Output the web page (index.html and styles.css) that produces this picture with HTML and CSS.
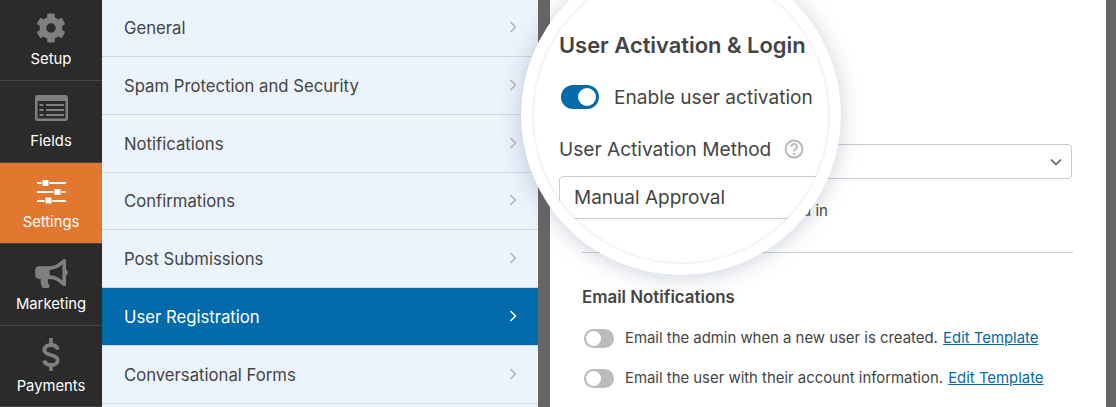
FILE: index.html
```html
<!DOCTYPE html>
<html lang="en">
<head>
<meta charset="utf-8">
<title>User Activation</title>
<link rel="stylesheet" href="styles.css">
</head>
<body>
<div class="app">
  <nav class="nav">
    <a class="nav-item">
      <svg class="ic ic-gear" viewBox="0 0 512 512"><path d="M487.4 315.7l-42.6-24.6c4.3-23.2 4.3-47 0-70.2l42.6-24.6c4.9-2.8 7.1-8.6 5.5-14-11.1-35.6-30-67.8-54.7-94.6-3.8-4.1-10-5.1-14.8-2.3L380.8 110c-17.9-15.4-38.5-27.3-60.8-35.1V25.8c0-5.6-3.9-10.5-9.4-11.7-36.7-8.2-74.3-7.8-109.2 0-5.5 1.2-9.4 6.1-9.4 11.7V75c-22.2 7.9-42.8 19.8-60.8 35.1L88.7 85.5c-4.9-2.8-11-1.9-14.8 2.3-24.7 26.7-43.6 58.9-54.7 94.6-1.7 5.4.6 11.2 5.5 14L67.3 221c-4.3 23.2-4.3 47 0 70.2l-42.6 24.6c-4.9 2.8-7.1 8.6-5.5 14 11.1 35.6 30 67.8 54.7 94.6 3.8 4.1 10 5.1 14.8 2.3l42.6-24.6c17.9 15.4 38.5 27.3 60.8 35.1v49.2c0 5.6 3.9 10.5 9.4 11.7 36.7 8.2 74.3 7.8 109.2 0 5.5-1.2 9.4-6.1 9.4-11.7v-49.2c22.2-7.9 42.8-19.8 60.8-35.1l42.6 24.6c4.9 2.8 11 1.9 14.8-2.3 24.7-26.7 43.6-58.9 54.7-94.6 1.5-5.5-.7-11.3-5.6-14.1zM256 336c-44.1 0-80-35.9-80-80s35.9-80 80-80 80 35.9 80 80-35.9 80-80 80z"/></svg>
      <span>Setup</span>
    </a>
    <a class="nav-item">
      <svg class="ic ic-fields" viewBox="0 0 33 26"><path fill-rule="evenodd" d="M3 0h27a3 3 0 0 1 3 3v20a3 3 0 0 1-3 3H3a3 3 0 0 1-3-3V3a3 3 0 0 1 3-3zM2.500 6v17a.5.5 0 0 0 .5.500h27a.5.5 0 0 0 .5-.500V6zM4.500 9h4v2h-4zM11 9h18v2H11zM4.500 14h4v2h-4zM11 14h18v2H11zM4.500 19h4v2h-4zM11 19h18v2H11z"/></svg>
      <span>Fields</span>
    </a>
    <a class="nav-item is-active">
      <svg class="ic ic-sliders" viewBox="0 0 29 25"><path d="M0 3h29v2H0zM0 12h29v2H0zM0 21h29v2H0z"/><path class="knob" d="M5 .5h7v7H5zM17 9.500h7v7h-7zM8 18h7v7H8z"/></svg>
      <span>Settings</span>
    </a>
    <a class="nav-item">
      <svg class="ic ic-horn" viewBox="0 0 576 512"><path d="M576 240c0-23.63-12.95-44.04-32-55.12V32.01C544 23.26 537.02 0 512 0c-7.12 0-14.19 2.38-19.98 7.02l-85.03 68.03C364.28 109.19 310.66 128 256 128H64c-35.35 0-64 28.65-64 64v96c0 35.35 28.65 64 64 64h33.7c-1.39 10.48-2.18 21.14-2.18 32 0 39.77 9.26 77.35 25.56 110.94 5.19 10.69 16.52 17.06 28.4 17.06h74.28c26.05 0 41.69-29.84 25.9-50.56-16.4-21.52-26.15-48.36-26.15-77.44 0-11.11 1.62-21.79 4.41-32H256c54.66 0 108.28 18.81 150.98 52.95l85.03 68.03a32.023 32.023 0 0 0 19.98 7.02c24.92 0 32-22.78 32-32V295.13C563.05 284.04 576 263.63 576 240zm-96 141.42l-33.05-26.44C392.95 311.78 325.12 288 256 288v-96c69.12 0 136.95-23.78 190.95-66.98L480 98.58v282.84z"/></svg>
      <span>Marketing</span>
    </a>
    <a class="nav-item">
      <svg class="ic ic-dollar" viewBox="0 0 18 33"><path class="dollar-s" d="M15.800 11.500C15 8.500 12.500 7 9 7 5 7 2.300 9 2.300 12c0 3 2.700 4 6.700 5 4 1 6.700 2.500 6.700 5.500 0 2.500-2.700 4.500-6.700 4.500-3.500 0-6-1.500-6.800-4.500"/><path d="M7.200 0h3.600v7H7.200zM7.200 27h3.600v6H7.200z"/></svg>
      <span>Payments</span>
    </a>
  </nav>

  <ul class="menu">
    <li class="menu-row">General<svg class="chev" viewBox="0 0 8 12"><path d="M1.500 1l5 5-5 5"/></svg></li>
    <li class="menu-row">Spam Protection and Security<svg class="chev" viewBox="0 0 8 12"><path d="M1.500 1l5 5-5 5"/></svg></li>
    <li class="menu-row">Notifications<svg class="chev" viewBox="0 0 8 12"><path d="M1.500 1l5 5-5 5"/></svg></li>
    <li class="menu-row">Confirmations<svg class="chev" viewBox="0 0 8 12"><path d="M1.500 1l5 5-5 5"/></svg></li>
    <li class="menu-row">Post Submissions<svg class="chev" viewBox="0 0 8 12"><path d="M1.500 1l5 5-5 5"/></svg></li>
    <li class="menu-row is-active">User Registration<svg class="chev" viewBox="0 0 8 12"><path d="M1.500 1l5 5-5 5"/></svg></li>
    <li class="menu-row">Conversational Forms<svg class="chev" viewBox="0 0 8 12"><path d="M1.500 1l5 5-5 5"/></svg></li>
  </ul>

  <main class="content">
    <div class="select-under"><svg class="select-chev" viewBox="0 0 12 8"><path d="M1 1.500l5 5 5-5"/></svg></div>
    <p class="hint">Users need approval to be logged in</p>
    <hr class="rule">
    <h3 class="notif-title">Email Notifications</h3>
    <div class="notif"><span class="toggle-off"></span><span>Email the admin when a new user is created. <a class="link">Edit Template</a></span></div>
    <div class="notif"><span class="toggle-off"></span><span>Email the user with their account information. <a class="link">Edit Template</a></span></div>
  </main>

  <section class="lens">
    <h2 class="lens-title">User Activation &amp; Login</h2>
    <div class="lens-toggle"><span class="toggle-on"></span><span>Enable user activation</span></div>
    <div class="lens-label"><span>User Activation Method</span>
      <svg class="help" viewBox="0 0 20 20"><circle cx="10" cy="10" r="8.500"/><path d="M7.300 7.800a2.800 2.800 0 1 1 4.200 2.400c-1 .6-1.500 1.100-1.500 2.300"/><path class="dot" d="M9 14h2v2H9z"/></svg>
    </div>
    <div class="lens-select">Manual Approval</div>
  </section>
</div>
</body>
</html>
```
FILE: styles.css
```css
* { box-sizing: border-box; }
html, body { margin: 0; height: 100%; overflow: hidden; }
body { font-family: Inter, "Liberation Sans", sans-serif; color: #444; background: #fff; }

.app { position: relative; display: flex; width: 1116px; height: 407px; overflow: hidden; border-right: 10px solid #666; }

/* left icon rail */
.nav { flex: 0 0 102px; background: #2b2b2b; display: flex; flex-direction: column; margin-top: -0.5px; }
.nav-item { flex: 0 0 81.5px; display: flex; flex-direction: column; align-items: center; color: #fff; font-size: 14.800px; line-height: 18px; border-bottom: 1px solid #454545; position: relative; }
.nav-item span { position: absolute; left: 0; right: 0; bottom: 12px; text-align: center; }
.nav-item:last-child span { bottom: 11px; }
.nav-item.is-active { background: #e27730; border-bottom-color: #454545; }
.ic { display: block; fill: #7f7f7f; }
.is-active .ic { fill: #fff; }
.is-active .knob { stroke: #e27730; stroke-width: 1; }
.dollar-s { fill: none; stroke: #7f7f7f; stroke-width: 3.800; }
.ic-gear { width: 30px; height: 30px; margin-top: 13px; }
.ic-fields { width: 33px; height: 26px; margin-top: 14px; }
.ic-sliders { width: 29px; height: 25px; margin-top: 16px; }
.ic-horn { width: 33px; height: 29px; margin-top: 15px; }
.ic-dollar { width: 18px; height: 33px; margin-top: 12px; }

/* settings list */
.menu { flex: 0 0 436px; margin: -0.800px 0 0; padding: 0; list-style: none; background: #ebf3fc; }
.menu-row { height: 57.800px; padding: 1px 21px 0 22px; display: flex; align-items: center; justify-content: space-between; font-size: 16.700px; color: #444; border-bottom: 1px solid #ccd6e0; }
.menu-row.is-active { background: #036aab; color: #fff; border-bottom-color: #ccd6e0; }
.chev { width: 8px; height: 12px; fill: none; stroke: #aaa; stroke-width: 1.200; margin-top: -2px; }
.is-active .chev { stroke: #fff; stroke-width: 1.500; }

/* form behind the lens */
.content { flex: 1; margin-left: 12px; position: relative; background: #fff; padding: 144px 33px 0 32px; font-size: 14.900px; box-shadow: -12px 0 0 #666; }
.select-under { height: 35px; margin-left: -8px; border: 1px solid #c5ccd4; border-radius: 4px; display: flex; align-items: center; justify-content: flex-end; padding-right: 9px; margin-right: 1px; }
.select-chev { width: 12px; height: 8px; fill: none; stroke: #555; stroke-width: 1.500; }
.hint { margin: 24px 0 0 -9px; line-height: 17px; height: 17px; white-space: nowrap; }
.rule { margin: 32px 0 0; border: 0; border-top: 1px solid #ccd0d4; }
.notif-title { margin: 35px 0 0; font-size: 16.900px; font-weight: 600; line-height: 19px; color: #444; }
.notif { display: flex; align-items: center; gap: 11px; height: 20px; margin-top: 20px; color: #444; }
.notif-title + .notif { margin-top: 21px; }
.toggle-off { flex: 0 0 30px; height: 19px; margin-left: 2px; border-radius: 10px; background: #bbb; position: relative; }
.toggle-off::before { content: ""; position: absolute; left: 2px; top: 2px; width: 15px; height: 15px; border-radius: 50%; background: #fff; }
.link { color: #036aab; text-decoration: underline; margin-left: 1px; }

/* magnifier lens */
.lens { position: absolute; left: 521px; top: -45px; width: 320px; height: 320px; border-radius: 50%; background: #fff; border: 11px solid #fff; overflow: hidden; padding: 66px 0 0 27px; box-shadow: 0 2px 22px rgba(70, 90, 120, .28), inset 0 0 3px rgba(120, 130, 150, .35); }
.lens-title { margin: 0; font-size: 21.900px; line-height: 26px; font-weight: 600; color: #444; white-space: nowrap; }
.lens-toggle { display: flex; align-items: center; gap: 15px; margin-top: 26px; margin-left: 2px; font-size: 19.100px; line-height: 26px; white-space: nowrap; }
.toggle-on { flex: 0 0 38px; height: 24px; border-radius: 12px; background: #036aab; position: relative; }
.toggle-on::before { content: ""; position: absolute; right: 3px; top: 3px; width: 18px; height: 18px; border-radius: 50%; background: #fff; }
.lens-label { display: flex; align-items: center; gap: 13px; margin-top: 26px; font-size: 19.100px; line-height: 26px; white-space: nowrap; }
.help { width: 20px; height: 20px; fill: none; stroke: #b5b5b5; stroke-width: 1.800; }
.help .dot { fill: #b5b5b5; stroke: none; }
.lens-select { width: 340px; height: 43px; margin-top: 14px; padding-left: 14px; border: 1px solid #c5ccd4; border-radius: 4px; font-size: 19px; line-height: 41px; white-space: nowrap; }
```
